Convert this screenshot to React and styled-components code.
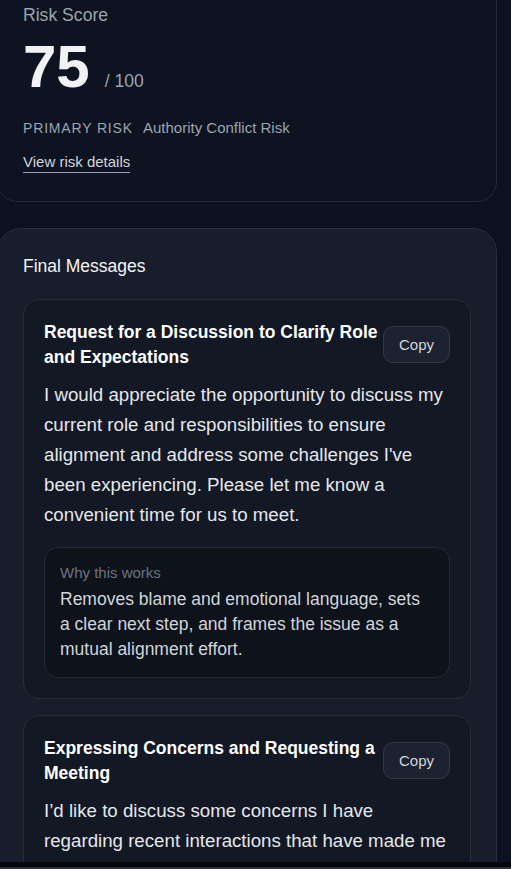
import React from 'react';
import styled, { createGlobalStyle } from 'styled-components';

const GlobalStyle = createGlobalStyle`
	html, body {
		margin: 0;
		padding: 0;
		background: #0b111e;
		overflow: hidden;
	}

	body {
		font-family: "Liberation Sans", Arial, sans-serif;
		color: #e5e7eb;
	}

	* {
		box-sizing: border-box;
	}
`

const messages = [
	{
		title: 'Request for a Discussion to Clarify Role and Expectations',
		body: "I would appreciate the opportunity to discuss my current role and responsibilities to ensure alignment and address some challenges I've been experiencing. Please let me know a convenient time for us to meet.",
		why: 'Removes blame and emotional language, sets a clear next step, and frames the issue as a mutual alignment effort.'
	},
	{
		title: 'Expressing Concerns and Requesting a Meeting',
		body: 'I’d like to discuss some concerns I have regarding recent interactions that have made me feel uncertain about expectations. Could we set up a time to talk this week?',
		why: 'States the concern calmly and invites a conversation instead of assigning fault.'
	}
];

function App() {
	return (
		<>
			<GlobalStyle />
			<Wrapper>
				<RiskCard>
					<p className='card-label'>Risk Score</p>
					<div className='score-row'>
						<span className='score'>75</span>
						<span className='score-max'>/ 100</span>
					</div>
					<div className='primary-row'>
						<span className='primary-label'>PRIMARY RISK</span>
						<span className='primary-value'>Authority Conflict Risk</span>
					</div>
					<a className='details-link' href='#details'>View risk details</a>
				</RiskCard>

				<MessagesCard>
					<h2 className='section-title'>Final Messages</h2>

					<div className='messages-list'>
						{messages.map((m) => (
							<MessageItem key={m.title}>
								<div className='message-head'>
									<h3 className='message-title'>{m.title}</h3>
									<CopyButton type='button'>Copy</CopyButton>
								</div>
								<p className='message-body'>{m.body}</p>
								<WhyBox>
									<p className='why-label'>Why this works</p>
									<p className='why-text'>{m.why}</p>
								</WhyBox>
							</MessageItem>
						))}
					</div>
				</MessagesCard>
			</Wrapper>
			<WindowEdge />
		</>
	);
}

const Wrapper = styled.main`
	width: 500px;
	margin-left: -3px;
	display: flex;
	flex-direction: column;
	gap: 26px;
`

const RiskCard = styled.section`
	margin-top: -23px;
	padding: 25px 25px 28px;
	background: #0d1320;
	border: 1px solid #232a38;
	border-radius: 20px;

	.card-label {
		margin: 0;
		font-size: 17.6px;
		line-height: 24px;
		color: #9ca3af;
	}

	.score-row {
		display: flex;
		align-items: baseline;
		gap: 15px;
		margin-top: 10px;
	}

	.score {
		font-size: 60px;
		line-height: 60px;
		font-weight: 700;
		color: #f1f2f4;
	}

	.score-max {
		font-size: 17.5px;
		color: #9ca3af;
	}

	.primary-row {
		display: flex;
		align-items: baseline;
		gap: 10px;
		margin-top: 21px;
		line-height: 20px;
	}

	.primary-label {
		font-size: 14px;
		letter-spacing: 0.06em;
		color: #9ca3af;
	}

	.primary-value {
		font-size: 15px;
		color: #9ca3af;
	}

	.details-link {
		display: inline-block;
		margin-top: 15px;
		padding-bottom: 1px;
		font-size: 15px;
		line-height: 18px;
		color: #d1d5db;
		text-decoration: none;
		border-bottom: 1px solid #9ca3af;
	}
`

const MessagesCard = styled.section`
	padding: 25px 25px 40px;
	background: #171d2a;
	border: 1px solid #262d3b;
	border-radius: 24px;

	.section-title {
		margin: 0;
		font-size: 17.5px;
		line-height: 24px;
		font-weight: 400;
		color: #f3f4f6;
	}

	.messages-list {
		display: flex;
		flex-direction: column;
		gap: 16px;
		margin-top: 21px;
	}
`

const MessageItem = styled.article`
	padding: 20px;
	background: #121824;
	border: 1px solid #262d3a;
	border-radius: 16px;

	.message-head {
		display: flex;
		align-items: center;
		gap: 4px;
	}

	.message-title {
		flex: 1;
		margin: 0;
		font-size: 17.5px;
		line-height: 25px;
		font-weight: 700;
		color: #ffffff;
	}

	.message-body {
		margin: 10px 0 0;
		font-size: 18.7px;
		line-height: 30px;
		color: #e5e7eb;
	}
`

const CopyButton = styled.button`
	flex-shrink: 0;
	width: 67px;
	height: 37px;
	margin-bottom: 2px;
	padding: 0;
	font-family: inherit;
	font-size: 15px;
	color: #d1d5db;
	background: #1c2230;
	border: 1px solid #30374a;
	border-radius: 10px;
	cursor: pointer;
`

const WhyBox = styled.div`
	margin-top: 17px;
	padding: 15px 18px 15px 15px;
	background: #0e121a;
	border: 1px solid #252b36;
	border-radius: 14px;

	.why-label {
		margin: 0;
		font-size: 15px;
		line-height: 20px;
		color: #6b7280;
	}

	.why-text {
		margin: 4px 0 0;
		font-size: 17.5px;
		line-height: 25px;
		color: #d1d5db;
	}
`

const WindowEdge = styled.div`
	position: fixed;
	left: 0;
	right: 0;
	bottom: 0;
	height: 7px;
	background: #05070b;
	border-bottom: 2px solid #2b2e34;
`

export default App;
